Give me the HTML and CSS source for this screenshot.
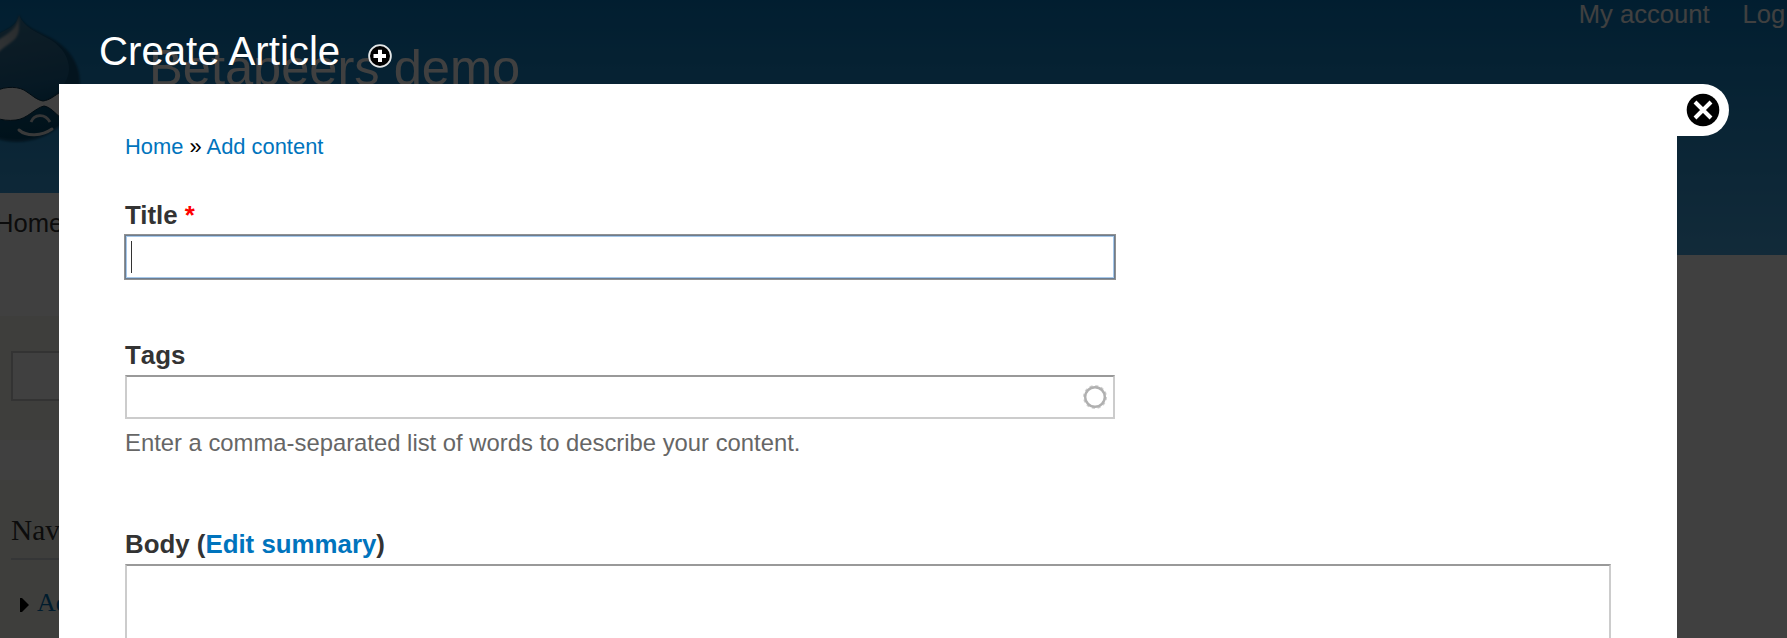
FILE: index.html
```html
<!DOCTYPE html>
<html lang="en">
<head>
<meta charset="utf-8">
<title>Create Article | Betapeers demo</title>
<link rel="stylesheet" href="styles.css">
</head>
<body>
<div class="site">
  <header class="site-header">
    <svg class="logo" width="90" height="150" viewBox="0 0 90 150" aria-label="Drupal">
      <defs>
        <linearGradient id="drop" x1="0.3" y1="0" x2="0.5" y2="1">
          <stop offset="0" stop-color="#3a7a9e"/>
          <stop offset=".35" stop-color="#2c6c93"/>
          <stop offset=".62" stop-color="#1a628e"/>
          <stop offset=".8" stop-color="#055078"/>
          <stop offset="1" stop-color="#03486c"/>
        </linearGradient>
        <linearGradient id="shine" x1="1" y1="0" x2="0" y2="1">
          <stop offset="0" stop-color="#b0b4b6"/>
          <stop offset="1" stop-color="#e0e0e0"/>
        </linearGradient>
        <filter id="soft"><feGaussianBlur stdDeviation="1"/></filter>
      </defs>
      <path d="M19 15C25 28 39 31 53 39C70 49 80 64 80 83C80 117 50 142 17 142C-17 142-46 117-46 83C-46 48-20 42-2 34C13 27 17 24 19 15Z" fill="#0a5078" filter="url(#soft)"/>
      <path d="M19 15C24 28 37 32 51 40C63 48 69 58 69 70C68 84 57 94 43 101L59 94L76 98C70 122 47 139 17 139C-17 139-46 117-46 83C-46 48-20 42-2 34C13 27 17 24 19 15Z" fill="url(#drop)"/>
      <path d="M19 15C19 25 20 31 17 36C13 43 5 45 -2 53L-2 40C12 32 18 26 19 15Z" fill="url(#shine)" opacity=".85" filter="url(#soft)"/>
      <path d="M-4 91C5 86 20 86 27 92C33 96 37 100 43 101C50 100 54 96 62 91V119C54 112 50 107 44 106C35 108 27 119 16 120C8 121 2 120 -4 118Z" fill="#fff" stroke="#052c44" stroke-width="1"/>
      <path d="M31 122C34 114 45 113 50 122" fill="none" stroke="#d0d4d6" stroke-width="2.8"/>
      <path d="M19 130C27 137 42 136 52 129" fill="none" stroke="#e4e4e4" stroke-width="3" stroke-linecap="round"/>
    </svg>
    <div class="site-name">Betapeers demo</div>
    <nav class="user-menu"><span>My account</span><span>Log out</span></nav>
  </header>
  <div class="main-tab">Home</div>
  <aside class="sidebar">
    <div class="block search"><div class="search-field"></div></div>
    <div class="block navigation">
      <h2 class="nav-title">Navigation</h2>
      <div class="nav-item">
        <svg width="10" height="15" viewBox="0 0 10 15"><path d="M0 0H2L9 7L2 14H0Z" fill="#000"/></svg>
        <span>Add content</span>
      </div>
    </div>
  </aside>
</div>
<div class="shade"></div>
<div class="overlay">
  <div class="overlay-title">
    <h1 class="title">Create Article</h1>
    <svg class="add" width="24" height="24" viewBox="0 0 24 24">
      <circle cx="12" cy="12" r="10.9" fill="#000" stroke="#e4e7e8" stroke-width="1.8"/>
      <path d="M12 5.7V18.1M5.5 12H18" stroke="#fff" stroke-width="4"/>
    </svg>
  </div>
  <div class="panel-row">
    <main class="panel">
      <div class="breadcrumb"><a>Home</a> » <a>Add content</a></div>
      <div class="label label-title">Title <span class="required">*</span></div>
      <div class="field focused"><span class="caret"></span></div>
      <div class="label label-tags">Tags</div>
      <div class="field tags">
        <svg width="24" height="24" viewBox="0 0 24 24">
          <circle cx="12" cy="12" r="10.8" fill="none" stroke="#cfcfcf" stroke-width="2.4" stroke-dasharray="3 2.65"/>
          <circle cx="12" cy="12" r="9.8" fill="none" stroke="#b0b0b0" stroke-width="2.4"/>
        </svg>
      </div>
      <div class="description">Enter a comma-separated list of words to describe your content.</div>
      <div class="label label-body">Body (<a>Edit summary</a>)</div>
      <div class="textarea"></div>
    </main>
    <div class="close">
      <svg width="34" height="34" viewBox="0 0 34 34">
        <circle cx="17" cy="17" r="16.3" fill="#000"/>
        <path d="M9 9L25 25M25 9L9 25" stroke="#fff" stroke-width="4"/>
      </svg>
    </div>
  </div>
</div>
</body>
</html>
```
FILE: styles.css
```css
* { box-sizing: border-box; }
body {
  margin: 0;
  position: relative;
  width: 1787px;
  height: 638px;
  overflow: hidden;
  background: #fff;
  font-family: "Liberation Sans", Arial, sans-serif;
}
.site { height: 638px; overflow: hidden; }
.site-header {
  display: flex;
  height: 255px;
  background: linear-gradient(#0779bf, #48a9e4);
  overflow: hidden;
}
.logo { flex: none; }
.site-name {
  margin: 39px 0 0 59px;
  font-size: 50.6px;
  line-height: 58px;
  color: #fff;
  white-space: nowrap;
}
.user-menu {
  display: flex;
  flex: none;
  gap: 33px;
  margin-left: auto;
  margin-right: -41px;
  font-size: 25.6px;
  line-height: 28px;
  color: #fff;
  white-space: nowrap;
}
.main-tab {
  position: relative;
  width: 90px;
  height: 62px;
  margin-top: -62px;
  padding: 14px 0 0;
  text-indent: -5px;
  background: #fff;
  font-size: 25.6px;
  line-height: 32px;
  color: #333;
}
.sidebar { width: 300px; padding-top: 61px; }
.block { background: #f6f6ee; }
.search { height: 124px; padding: 35px 11px; }
.search-field { height: 50px; border: 2px solid #ccc; background: #fff; }
.navigation { height: 200px; margin-top: 40px; padding: 32px 11px; }
.nav-title {
  height: 48px;
  margin: 0 0 28px;
  border-bottom: 2px solid #d3d7d9;
  font: 29.4px/36px "Liberation Serif", serif;
  color: #333;
}
.nav-item {
  display: flex;
  align-items: center;
  gap: 7px;
  padding-left: 9px;
  font: 26px/30px "Liberation Serif", serif;
  color: #0071b3;
}
.nav-item svg { position: relative; top: 2px; }
.shade { position: absolute; inset: 0; background: rgba(0, 0, 0, .75); }
.overlay { position: absolute; inset: 0; }
.overlay-title {
  display: flex;
  align-items: flex-start;
  height: 84px;
  padding: 28px 0 0 99px;
}
.title { margin: 1px 0 0; font-size: 40.2px; line-height: 46px; font-weight: 400; color: #fff; }
.add { margin: 16px 0 0 28px; }
.panel-row { display: flex; align-items: flex-start; padding-left: 59px; }
.panel { width: 1618px; height: 554px; padding: 50px 66px 0; background: #fff; overflow: hidden; }
.panel a { color: #0074bd; }
.breadcrumb { font-size: 21.9px; line-height: 26px; color: #000; }
.label { font-size: 25.85px; line-height: 30px; font-weight: 700; color: #333; }
.label-title { margin-top: 40px; }
.label-tags { margin-top: 61px; font-kerning: none; }
.label-body { margin-top: 71px; }
.required { color: #f00; }
.field { width: 990px; height: 44px; border: 2px solid #ccc; border-top-color: #999; background: #fff; }
.focused {
  margin-top: 5px;
  padding: 5px;
  border: 1px solid #6c7d90;
  outline: 1px solid #909090;
  box-shadow: inset 0 0 0 1px #a6c8ea;
}
.caret { display: block; width: 1px; height: 32px; background: #333; }
.tags { display: flex; justify-content: flex-end; align-items: center; margin-top: 5px; padding-right: 6px; }
.description { margin-top: 9px; font-size: 23.84px; line-height: 30px; color: #666; }
.textarea { height: 120px; margin-top: 5px; border: 2px solid #ccc; border-top-color: #999; }
.close {
  display: flex;
  align-items: center;
  width: 52px;
  height: 52px;
  padding-left: 8.5px;
  padding-bottom: 1px;
  background: #fff;
  border-radius: 0 26px 26px 0;
}
```
